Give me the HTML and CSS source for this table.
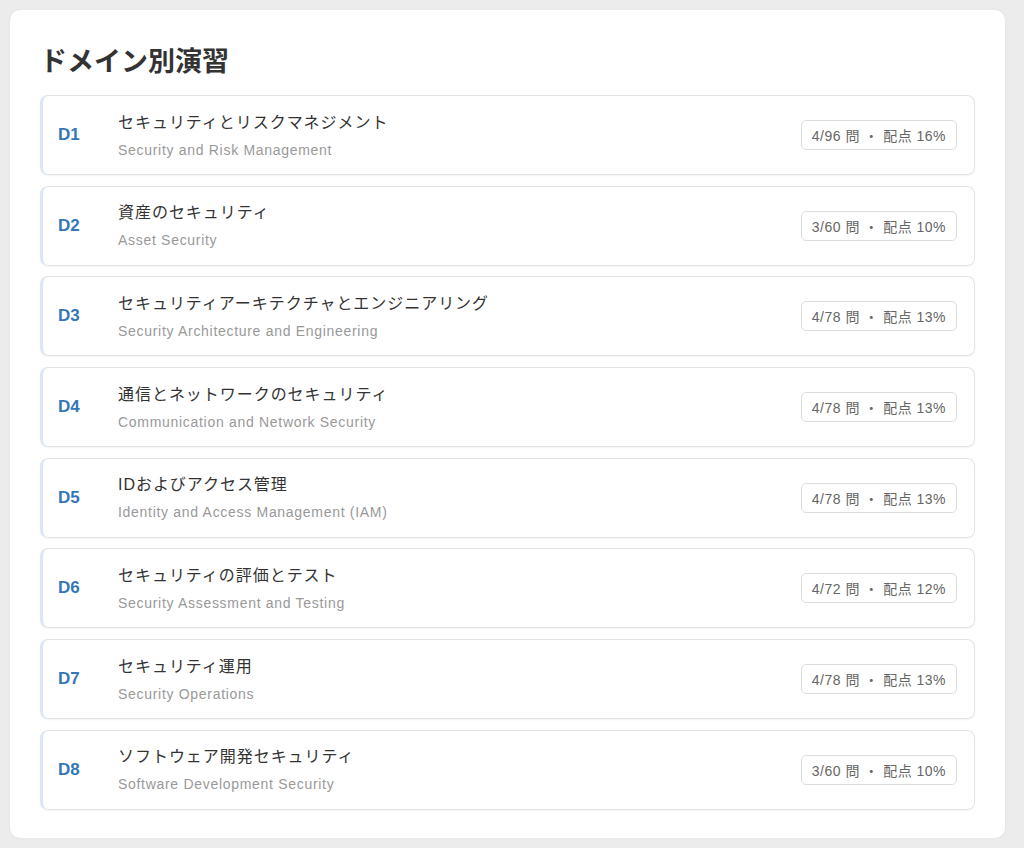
FILE: index.html
```html
<!DOCTYPE html>
<html lang="ja">
<head>
<meta charset="utf-8">
<link rel="stylesheet" href="styles.css">
</head>
<body>
<div class="panel">
  <h1 class="title">ドメイン別演習</h1>
  <div class="list">
    <div class="card"><div class="code">D1</div><div class="names"><div class="ja">セキュリティとリスクマネジメント</div><div class="en">Security and Risk Management</div></div><div class="badge">4/96 問 ・ 配点 16%</div></div>
    <div class="card"><div class="code">D2</div><div class="names"><div class="ja">資産のセキュリティ</div><div class="en">Asset Security</div></div><div class="badge">3/60 問 ・ 配点 10%</div></div>
    <div class="card"><div class="code">D3</div><div class="names"><div class="ja">セキュリティアーキテクチャとエンジニアリング</div><div class="en">Security Architecture and Engineering</div></div><div class="badge">4/78 問 ・ 配点 13%</div></div>
    <div class="card"><div class="code">D4</div><div class="names"><div class="ja">通信とネットワークのセキュリティ</div><div class="en">Communication and Network Security</div></div><div class="badge">4/78 問 ・ 配点 13%</div></div>
    <div class="card"><div class="code">D5</div><div class="names"><div class="ja">IDおよびアクセス管理</div><div class="en">Identity and Access Management (IAM)</div></div><div class="badge">4/78 問 ・ 配点 13%</div></div>
    <div class="card"><div class="code">D6</div><div class="names"><div class="ja">セキュリティの評価とテスト</div><div class="en">Security Assessment and Testing</div></div><div class="badge">4/72 問 ・ 配点 12%</div></div>
    <div class="card"><div class="code">D7</div><div class="names"><div class="ja">セキュリティ運用</div><div class="en">Security Operations</div></div><div class="badge">4/78 問 ・ 配点 13%</div></div>
    <div class="card"><div class="code">D8</div><div class="names"><div class="ja">ソフトウェア開発セキュリティ</div><div class="en">Software Development Security</div></div><div class="badge">3/60 問 ・ 配点 10%</div></div>
  </div>
</div>
</body>
</html>
```
FILE: styles.css
```css
html, body {
  margin: 0;
  padding: 0;
  background: #ececec;
}
body {
  padding: 10px 19px 10px 10px;
  font-family: "Liberation Sans", "Noto Sans CJK JP", sans-serif;
  color: #333;
}
.panel {
  background: #fff;
  border-radius: 10px;
  padding: 34px 30px 28px 30px;
  box-shadow: 0 0 2px rgba(0,0,0,0.08);
  height: 828px;
  box-sizing: border-box;
}
.title {
  margin: 0 0 19px 0;
  font-size: 27px;
  line-height: 32px;
  font-weight: 700;
  color: #333;
  font-family: "Noto Sans CJK JP", sans-serif;
}
.list {
  display: flex;
  flex-direction: column;
  gap: 10.7px;
}
.card {
  display: flex;
  align-items: center;
  height: 80px;
  box-sizing: border-box;
  border: 1px solid #e3e3e3;
  border-left: 3px solid #dbe8f4;
  border-radius: 8px;
  padding: 0 17px 0 15px;
  box-shadow: 0 1px 2px rgba(0,0,0,0.05);
}
.code {
  width: 60px;
  font-size: 17px;
  font-weight: 700;
  color: #3477b8;
  font-family: "Liberation Sans", sans-serif;
}
.names {
  flex: 1;
  display: flex;
  flex-direction: column;
  gap: 5px;
}
.ja {
  font-size: 16px;
  line-height: 24px;
  color: #333;
  letter-spacing: 0.06em;
  font-family: "Liberation Sans", "Noto Sans CJK JP", sans-serif;
}
.en {
  font-size: 14px;
  line-height: 20px;
  color: #999;
  letter-spacing: 0.05em;
}
.badge {
  border: 1px solid #dcdcdc;
  border-radius: 5px;
  height: 30px;
  box-sizing: border-box;
  padding: 0 10px;
  display: flex;
  align-items: center;
  font-size: 14px;
  color: #666;
  letter-spacing: 0.035em;
  font-family: "Liberation Sans", "Noto Sans CJK JP", sans-serif;
  white-space: nowrap;
}
```
